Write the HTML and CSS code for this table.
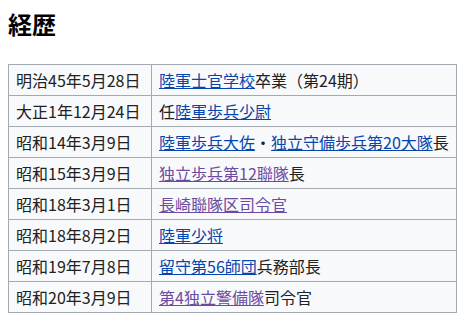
FILE: index.html
```html
<!DOCTYPE html>
<html lang="ja">
<head>
<meta charset="utf-8">
<title>経歴</title>
<link rel="stylesheet" href="styles.css">
</head>
<body>
<h2 class="heading">経歴</h2>
<table class="career">
<tbody>
<tr><td class="date">明治45年5月28日</td><td class="desc"><a class="link" href="#">陸軍士官学校</a>卒業（第24期）</td></tr>
<tr><td class="date">大正1年12月24日</td><td class="desc">任<a class="link" href="#">陸軍歩兵少尉</a></td></tr>
<tr><td class="date">昭和14年3月9日</td><td class="desc"><a class="link" href="#">陸軍歩兵大佐</a>・<a class="link" href="#">独立守備歩兵第20大隊</a>長</td></tr>
<tr><td class="date">昭和15年3月9日</td><td class="desc"><a class="link visited" href="#">独立歩兵第12聯隊</a>長</td></tr>
<tr><td class="date">昭和18年3月1日</td><td class="desc"><a class="link visited" href="#">長崎聯隊区司令官</a></td></tr>
<tr><td class="date">昭和18年8月2日</td><td class="desc"><a class="link" href="#">陸軍少将</a></td></tr>
<tr><td class="date">昭和19年7月8日</td><td class="desc"><a class="link" href="#">留守第56師団</a>兵務部長</td></tr>
<tr><td class="date">昭和20年3月9日</td><td class="desc"><a class="link visited" href="#">第4独立警備隊</a>司令官</td></tr>
</tbody>
</table>
</body>
</html>
```
FILE: styles.css
```css
body {
  margin: 8px;
  background: #ffffff;
  color: #202122;
  font-family: "Noto Sans CJK JP", "Noto Sans", sans-serif;
}
.heading {
  margin: 0 0 25px 0;
  font-size: 24px;
  line-height: 31px;
  font-weight: bold;
  color: #000000;
}
.career {
  border-collapse: collapse;
  background: #f8f9fa;
  border: 1px solid #a2a9b1;
  width: 449px;
  font-size: 16px;
}
.career td {
  border: 1px solid #a2a9b1;
  padding: 4px 6px 4px 7px;
  height: 22px;
  line-height: 22px;
  white-space: nowrap;
  box-sizing: content-box;
}
.career .date {
  width: 129px;
}
.link {
  color: #0645ad;
  text-decoration: underline;
}
.link.visited {
  color: #6b4ba1;
}
```
